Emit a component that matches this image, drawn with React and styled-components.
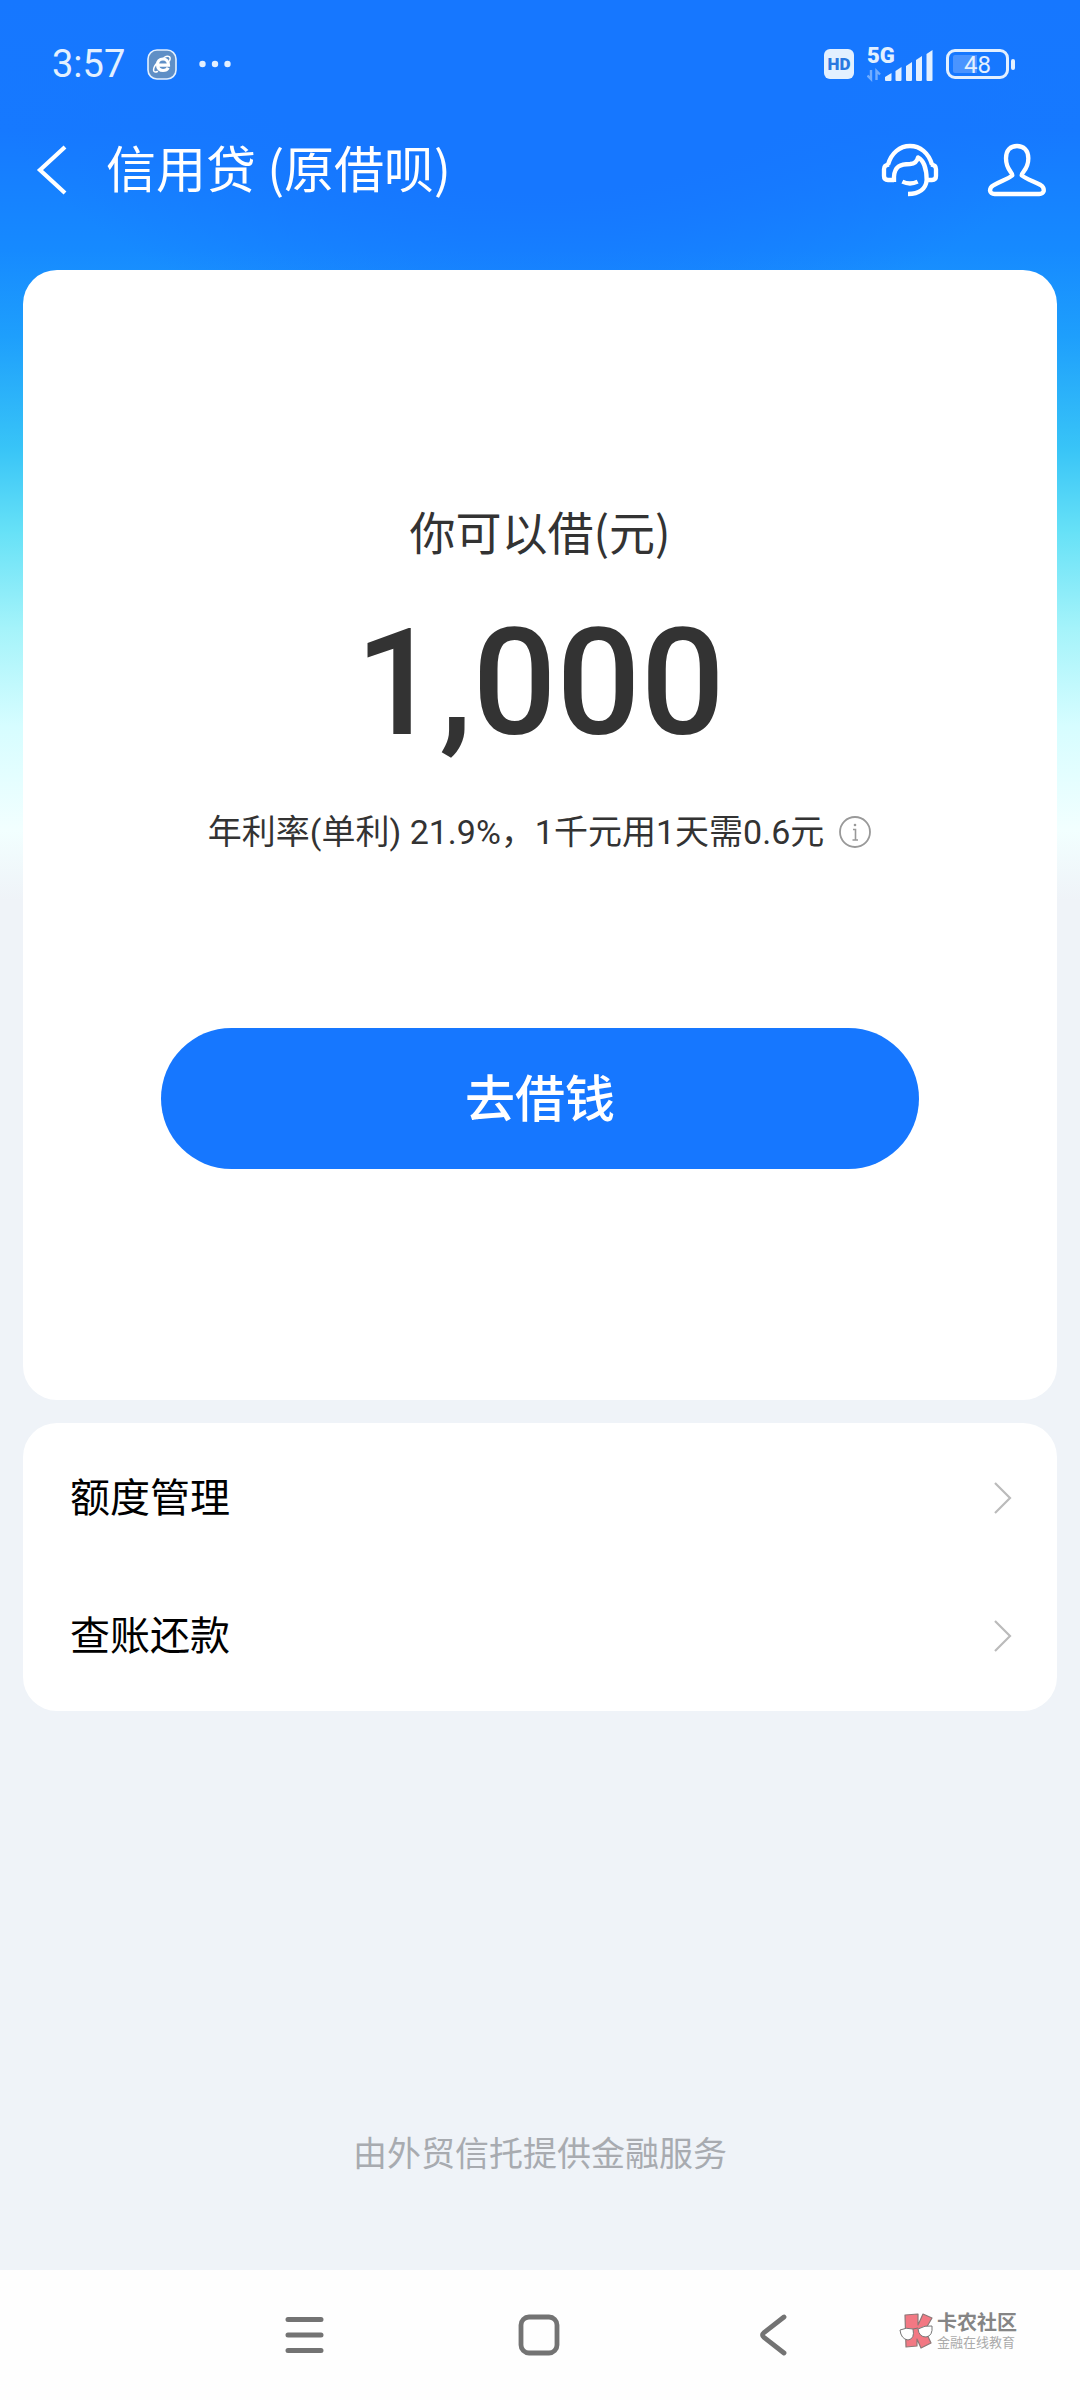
import React from 'react';
import styled, { createGlobalStyle, ThemeProvider } from 'styled-components';

const theme = {
  colors: {
    primary: '#1677ff',
    background: '#eff3f8',
    surface: '#ffffff',
    text: '#333333',
    heading: '#000000',
    muted: '#a8abb0',
    statusIcon: '#e3f0ff',
    navIcon: '#737373',
  },
  fonts: {
    cjk: '"Noto Sans CJK SC", sans-serif',
    latin: 'Roboto, sans-serif',
    mixed: 'Roboto, "Noto Sans CJK SC", sans-serif',
  },
  radius: '34px',
  // Noto CJK sits low in its line box, large labels get this below them
  textLift: '8px',
};

const GlobalStyle = createGlobalStyle`
  * {
    box-sizing: border-box;
  }

  body {
    margin: 0;
    background: ${({ theme }) => theme.colors.background};
    font-family: ${({ theme }) => theme.fonts.cjk};
  }

  button {
    padding: 0;
    border: 0;
    background: none;
    color: inherit;
    font: inherit;
    cursor: pointer;
  }

  svg {
    display: block;
  }
`;

const Page = styled.div`
  display: flex;
  flex-direction: column;
  min-height: 100vh;
  background:
    radial-gradient(ellipse 54% 350px at 50% 0, #1677ff 55%, rgba(22, 119, 255, 0) 100%) no-repeat,
    linear-gradient(
      180deg,
      #1677ff 0,
      #1679ff 130px,
      #168aff 250px,
      #1e9ffc 337px,
      #38c4f7 448px,
      #66e1f7 531px,
      #a4f3fa 628px,
      #d6fdff 725px,
      #f2ffff 830px,
      ${({ theme }) => theme.colors.background} 900px
    );
`;

const StatusBar = styled.div`
  display: flex;
  align-items: center;
  justify-content: space-between;
  height: 128px;
  padding: 0 65px 0 52px;
  color: ${({ theme }) => theme.colors.statusIcon};
  font-family: ${({ theme }) => theme.fonts.latin};
`;

const StatusGroup = styled.div`
  display: flex;
  align-items: center;
  gap: ${({ $gap }) => $gap};
`;

const Clock = styled.span`
  font-size: 38px;
  line-height: 40px;
`;

const HdBadge = styled.span`
  width: 30px;
  height: 30px;
  border-radius: 6px;
  background: ${({ theme }) => theme.colors.statusIcon};
  color: #2a78e0;
  font-size: 17px;
  font-weight: 900;
  line-height: 30px;
  text-align: center;
`;

const Signal = styled.div`
  position: relative;
  width: 66px;
  height: 36px;
`;

const SignalLabel = styled.span`
  position: absolute;
  top: 0;
  left: 0;
  font-size: 22px;
  font-weight: 900;
  line-height: 20px;
`;

const Battery = styled.div`
  display: flex;
  align-items: center;
  gap: 2px;

  &::after {
    content: '';
    width: 4px;
    height: 11px;
    border-radius: 2px;
    background: ${({ theme }) => theme.colors.statusIcon};
  }
`;

const BatteryBody = styled.div`
  width: 63px;
  height: 30px;
  padding: 3px 4px;
  border: 3px solid ${({ theme }) => theme.colors.statusIcon};
  border-radius: 9px;
`;

const BatteryLevel = styled.div`
  height: 18px;
  border-radius: 2px;
  background: linear-gradient(90deg, #4a94ff 48%, transparent 48%);
  font-size: 24px;
  line-height: 20px;
  text-align: center;
`;

const Header = styled.header`
  display: flex;
  align-items: center;
  height: 84px;
  padding: 0 32px 0 36px;
  color: #ffffff;
`;

const Title = styled.h1`
  flex: 1;
  margin: 0 0 0 36px;
  padding-bottom: ${({ theme }) => theme.textLift};
  font-size: 50px;
  font-weight: 400;
  line-height: 60px;
`;

const HeaderActions = styled.div`
  display: flex;
  gap: 46px;
`;

const Main = styled.main`
  display: flex;
  flex-direction: column;
  gap: 23px;
  padding: 58px 23px 0;
`;

const Card = styled.section`
  border-radius: ${({ theme }) => theme.radius};
  background: ${({ theme }) => theme.colors.surface};
`;

const LoanCard = styled(Card)`
  display: flex;
  flex-direction: column;
  align-items: center;
  padding: 230px 138px 231px;
  color: ${({ theme }) => theme.colors.text};
`;

const LoanLabel = styled.div`
  font-size: 46px;
  line-height: 60px;
`;

const Amount = styled.div`
  margin-top: 44px;
  font-family: ${({ theme }) => theme.fonts.latin};
  font-size: 148px;
  font-weight: 500;
  line-height: 160px;
`;

const RateRow = styled.div`
  display: flex;
  align-items: center;
  gap: 14px;
  margin-top: 44px;
  font-family: ${({ theme }) => theme.fonts.mixed};
  font-size: 34px;
  line-height: 48px;
  white-space: nowrap;
`;

const BorrowButton = styled.button`
  align-self: stretch;
  height: 141px;
  margin-top: 172px;
  padding-bottom: ${({ theme }) => theme.textLift};
  border-radius: 71px;
  background: ${({ theme }) => theme.colors.primary};
  color: #ffffff;
  font-size: 50px;
  font-weight: 500;
`;

const MenuCard = styled(Card)`
  padding: 6px 0;
`;

const MenuRow = styled.a`
  display: flex;
  align-items: center;
  justify-content: space-between;
  height: 138px;
  padding: 0 44px 0 47px;
  color: ${({ theme }) => theme.colors.heading};
  text-decoration: none;
`;

const MenuLabel = styled.span`
  padding-bottom: 6px;
  font-size: 40px;
  line-height: 60px;
`;

const Provider = styled.p`
  margin: auto 0 0;
  padding: 48px 0 98px;
  color: ${({ theme }) => theme.colors.muted};
  font-size: 34px;
  line-height: 40px;
  text-align: center;
`;

const SystemNav = styled.nav`
  position: relative;
  display: flex;
  align-items: center;
  justify-content: center;
  gap: 155px;
  height: 130px;
  padding-right: 2px;
  background: #fefefe;
  color: ${({ theme }) => theme.colors.navIcon};
`;

const NavButton = styled.button`
  display: grid;
  place-items: center;
  width: 80px;
  height: 80px;
`;

const Watermark = styled.div`
  position: absolute;
  top: 41px;
  right: 63px;
  display: flex;
  align-items: center;
  gap: 2px;
  color: #858585;
  font-family: ${({ theme }) => theme.fonts.mixed};
`;

const WatermarkName = styled.div`
  font-size: 20px;
  font-weight: 700;
  line-height: 24px;
`;

const WatermarkTagline = styled.div`
  color: #aaaaaa;
  font-size: 13px;
  line-height: 16px;
`;

const BrowserIcon = () => (
  <svg width="30" height="31" viewBox="0 0 30 31" fill="none" aria-hidden="true">
    <rect x="1" y="1" width="28" height="29" rx="9" fill="#5f8fc6" stroke="#e3f0ff" strokeWidth="1.6" />
    <path d="M10.5 16.2H21.5C21.5 12 19 10 16 10C12.5 10 10.5 12.5 10.5 15.5C10.5 19.5 13 21.5 16 21.5C18.5 21.5 20.3 20.5 21.2 18.8" stroke="#fff" strokeWidth="3.2" />
    <path d="M9 15C5.5 20 5.5 24.5 10.5 22.5M17 8.5C21.5 6 24.5 7.5 22.5 12" stroke="#fff" strokeWidth="1.4" strokeLinecap="round" />
  </svg>
);

const DotsIcon = () => (
  <svg width="32" height="8" viewBox="0 0 32 8" fill="currentColor" aria-hidden="true">
    <circle cx="3.5" cy="4" r="3.2" />
    <circle cx="16" cy="4" r="3.2" />
    <circle cx="28.5" cy="4" r="3.2" />
  </svg>
);

const SignalBars = () => (
  <svg width="66" height="36" viewBox="0 0 66 36" fill="currentColor" aria-hidden="true">
    <path d="M4 24V33L0.5 29.5M9.5 34V25L13 28.5" fill="none" stroke="currentColor" strokeWidth="2.4" opacity="0.45" />
    <path d="M18 31L24.5 27V34Q24.5 35 23.5 35H19Q18 35 18 34Z" />
    <path d="M28.5 25L34.5 21V34Q34.5 35 33.5 35H29.5Q28.500 35 28.5 34Z" />
    <path d="M39 20L45 16V34Q45 35 44 35H40Q39 35 39 34Z" />
    <path d="M49 14L55 10V34Q55 35 54 35H50Q49 35 49 34Z" />
    <path d="M59.5 8L65.5 4V34Q65.5 35 64.5 35H60.5Q59.5 35 59.5 34Z" />
  </svg>
);

const BackIcon = () => (
  <svg width="34" height="52" viewBox="0 0 34 52" fill="none" aria-hidden="true">
    <path d="M29 3L4 26L29 49" stroke="currentColor" strokeWidth="4.2" />
  </svg>
);

const ServiceIcon = () => (
  <svg width="60" height="56" viewBox="300 366 180 168" fill="none" stroke="currentColor" strokeWidth="13" strokeLinejoin="round" aria-hidden="true">
    <path d="M324 434C334 398 360 378 390 378C420 378 446 398 456 434" />
    <path d="M342 480H324Q312 480 312 468V448Q312 434 328 434" />
    <path d="M342 486V470C344 440 360 432 390 432C404 431 412 422 414 412C430 420 440 446 440 480C438 506 418 522 384 522" />
    <path d="M440 480H456Q468 480 468 468V448Q468 434 452 434" />
    <path d="M367 485Q390 496 413 485" />
  </svg>
);

const ProfileIcon = () => (
  <svg width="62" height="56" viewBox="618 366 186 168" fill="none" stroke="currentColor" strokeWidth="13" strokeLinejoin="round" aria-hidden="true">
    <path d="M697 466C697 455 678 450 678 415C678 390 692 378 711 378C730 378 745 390 745 415C745 450 725 455 725 466C740 478 762 484 782 495C792 501 792 508 791 514Q788 522 778 522H644Q632 522 630 512C630 505 632 500 640 496C660 484 682 478 697 466Z" />
  </svg>
);

const InfoIcon = () => (
  <svg width="34" height="34" viewBox="0 0 34 34" fill="none" stroke="#999" aria-hidden="true">
    <circle cx="17" cy="17" r="15" strokeWidth="1.8" />
    <path d="M15 14.5H17.5V25M14.5 25H20" strokeWidth="1.6" />
    <circle cx="17" cy="10" r="1.3" fill="#999" stroke="none" />
  </svg>
);

const ChevronIcon = () => (
  <svg width="22" height="34" viewBox="0 0 22 34" fill="none" aria-hidden="true">
    <path d="M4 2L19 17L4 32" stroke="#bbb" strokeWidth="2.2" />
  </svg>
);

const MenuIcon = () => (
  <svg width="42" height="42" viewBox="0 0 42 42" stroke="currentColor" strokeWidth="5" strokeLinecap="round" aria-hidden="true">
    <path d="M5 5.5H38M5 21H38M5 36.5H38" />
  </svg>
);

const HomeIcon = () => (
  <svg width="42" height="42" viewBox="0 0 42 42" fill="none" aria-hidden="true">
    <rect x="3" y="3" width="36" height="36" rx="8" stroke="currentColor" strokeWidth="4.8" />
  </svg>
);

const NavBackIcon = () => (
  <svg width="42" height="42" viewBox="0 0 42 42" fill="none" aria-hidden="true">
    <path d="M31 3L11 18.5Q8 21 11 23.5L31 39" stroke="currentColor" strokeWidth="4.8" strokeLinecap="round" />
  </svg>
);

const WatermarkLogo = () => (
  <svg width="36" height="38" viewBox="0 0 36 38" strokeLinejoin="round" aria-hidden="true">
    <path d="M6 3L19 2L19 13L24 2L33 6L26 18L32 31L22 36L18 27L18 34L7 35Z" fill="#f27883" stroke="#8d7878" strokeWidth="1.2" />
    <path d="M1 18Q7 15 14 17Q16 27 9 28Q2 27 1 18Z" fill="#fff" stroke="#777" />
    <path d="M19 17Q26 13 33 14Q34 24 27 25Q20 25 19 17Z" fill="#fff" stroke="#777" />
    <path d="M14 17L19 16" stroke="#777" />
  </svg>
);

const menuItems = [
  { id: 'quota', label: '额度管理' },
  { id: 'repayment', label: '查账还款' },
];

const App = () => {
  return (
    <ThemeProvider theme={theme}>
      <GlobalStyle />
      <Page>
        <StatusBar>
          <StatusGroup $gap="22px">
            <Clock>3:57</Clock>
            <BrowserIcon />
            <DotsIcon />
          </StatusGroup>
          <StatusGroup $gap="13px">
            <HdBadge>HD</HdBadge>
            <Signal>
              <SignalBars />
              <SignalLabel>5G</SignalLabel>
            </Signal>
            <Battery>
              <BatteryBody>
                <BatteryLevel>48</BatteryLevel>
              </BatteryBody>
            </Battery>
          </StatusGroup>
        </StatusBar>

        <Header>
          <button type="button" aria-label="返回">
            <BackIcon />
          </button>
          <Title>信用贷 (原借呗)</Title>
          <HeaderActions>
            <button type="button" aria-label="客服">
              <ServiceIcon />
            </button>
            <button type="button" aria-label="我的">
              <ProfileIcon />
            </button>
          </HeaderActions>
        </Header>

        <Main>
          <LoanCard>
            <LoanLabel>你可以借(元)</LoanLabel>
            <Amount>1,000</Amount>
            <RateRow>
              <span>年利率(单利) 21.9%，1千元用1天需0.6元</span>
              <button type="button" aria-label="利率说明">
                <InfoIcon />
              </button>
            </RateRow>
            <BorrowButton type="button">去借钱</BorrowButton>
          </LoanCard>

          <MenuCard>
            {menuItems.map((item) => (
              <MenuRow key={item.id} href={`#${item.id}`}>
                <MenuLabel>{item.label}</MenuLabel>
                <ChevronIcon />
              </MenuRow>
            ))}
          </MenuCard>
        </Main>

        <Provider>由外贸信托提供金融服务</Provider>

        <SystemNav aria-label="系统导航">
          <NavButton type="button" aria-label="菜单">
            <MenuIcon />
          </NavButton>
          <NavButton type="button" aria-label="主页">
            <HomeIcon />
          </NavButton>
          <NavButton type="button" aria-label="后退">
            <NavBackIcon />
          </NavButton>
          <Watermark>
            <WatermarkLogo />
            <div>
              <WatermarkName>卡农社区</WatermarkName>
              <WatermarkTagline>金融在线教育</WatermarkTagline>
            </div>
          </Watermark>
        </SystemNav>
      </Page>
    </ThemeProvider>
  );
};

export default App;
